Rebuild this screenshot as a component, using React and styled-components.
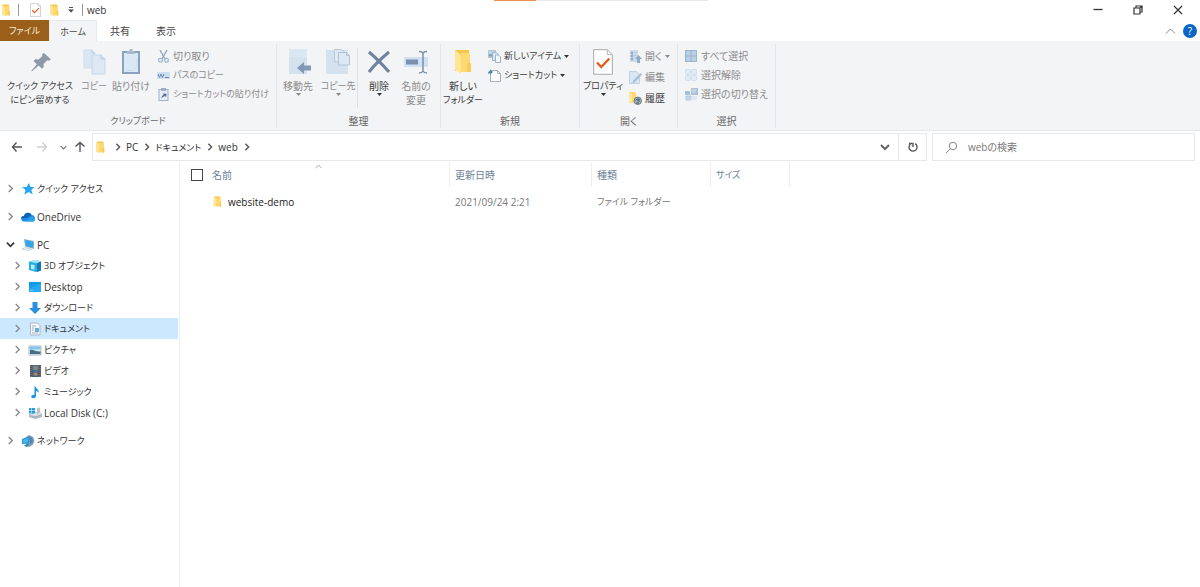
import React from 'react';
import styled, { createGlobalStyle } from 'styled-components';

const GlobalStyle = createGlobalStyle`
  * { box-sizing: border-box; }
  html { height: 100%; }
  body {
    margin: 0;
    height: 100%;
    background: #fff;
    color: #333;
    font-family: "Open Sans", "Noto Sans CJK JP", sans-serif;
    font-size: 10px;
    line-height: 14px;
    font-feature-settings: "palt";
  }
  #root { height: 100%; }
  button, input { font: inherit; font-feature-settings: inherit; color: inherit; }
  button { padding: 0; border: 0; background: none; }
  svg { display: block; flex: none; }
`;

// Katakana labels are set one step smaller than kanji and Latin ones.
const sizeFor = (text) => (/[ァ-ヶ]/.test(text) ? 9 : 10);

const Label = styled.span`
  font-size: ${(p) => sizeFor(p.children)}px;
`;

const Window = styled.div`
  min-height: 100%;
  display: flex;
  flex-direction: column;
`;

const LoadStrip = styled.div`
  position: absolute;
  top: 0;
  left: 41%;
  width: 214px;
  height: 1px;
  margin-left: 2px;
  background: linear-gradient(90deg, #ee9052 0 42px, #e8e8e8 42px);
`;

const TitleBar = styled.header`
  display: flex;
  align-items: center;
  height: 20px;
  padding: 0 16px 0 1px;
`;

const QuickTools = styled.div`
  display: flex;
  align-items: center;
  flex: 1;
`;

const QuickButton = styled.button`
  display: grid;
  place-items: center;
  width: ${(p) => p.$w || 18}px;
  height: 20px;
`;

const Rule = styled.span`
  width: 1px;
  height: 12px;
  margin: 0 ${(p) => p.$right || 0}px 0 ${(p) => p.$left || 0}px;
  background: #999;
`;

const Title = styled.h1`
  margin: 0;
  font-size: 10px;
  font-weight: 400;
  line-height: 20px;
`;

const WindowControls = styled.div`
  display: flex;
  gap: 28px;
`;

const ControlButton = styled.button`
  display: grid;
  place-items: center;
  width: 12px;
  height: 18px;
`;

const TabBar = styled.nav`
  display: flex;
  align-items: center;
  height: 21px;
  padding-right: 3px;
`;

const Tab = styled.button`
  width: ${(p) => p.$w || 46}px;
  height: 21px;
  color: ${(p) => (p.$file ? '#fff3df' : '#444')};
  background: ${(p) => (p.$file ? '#995f1b' : p.$active ? '#f3f4f6' : 'transparent')};
  ${(p) => p.$active && 'border: solid #e8e9eb; border-width: 1px 1px 0;'}
`;

const TabEnd = styled.div`
  display: flex;
  align-items: center;
  gap: 7px;
  margin-left: auto;
`;

const HelpButton = styled.button`
  width: 14px;
  height: 14px;
  border-radius: 50%;
  background: #0b66c3;
  color: #fff;
  line-height: 14px;
`;

const Ribbon = styled.section`
  display: flex;
  height: 90px;
  padding-top: 3px;
  background: #f3f4f6;
  border-bottom: 1px solid #e6e7e9;
`;

const Group = styled.div`
  display: flex;
  flex-direction: column;
  justify-content: space-between;
  flex: none;
  width: ${(p) => p.$w}px;
  height: 84px;
  border-right: 1px solid #e4e5e8;
`;

const GroupBody = styled.div`
  display: flex;
  align-items: flex-start;
`;

const GroupName = styled.div`
  text-align: center;
  color: #666;
`;

const BigButton = styled.button`
  display: flex;
  flex: none;
  flex-direction: column;
  align-items: center;
  width: ${(p) => p.$w}px;
  padding-top: 5px;
  color: ${(p) => (p.$off ? '#8b8b8b' : '#3c3c3c')};
  white-space: nowrap;

  > svg:first-child { margin-bottom: 4px; }
`;

const SmallList = styled.div`
  display: flex;
  flex-direction: column;
  gap: ${(p) => p.$gap || 5}px;
  padding: 5px 0 0 ${(p) => p.$left || 3}px;
`;

const SmallButton = styled.button`
  display: flex;
  align-items: center;
  gap: 3px;
  height: 14px;
  color: ${(p) => (p.$off ? '#8b8b8b' : '#3c3c3c')};
  white-space: nowrap;
`;

const Divider = styled.span`
  width: 1px;
  height: 60px;
  margin-top: 4px;
  background: #dfe0e3;
`;

const AddressRow = styled.div`
  display: flex;
  align-items: center;
  padding: 2px 5px 0 8px;
`;

const NavButton = styled.button`
  display: grid;
  place-items: center;
  width: ${(p) => p.$w || 18}px;
  height: 28px;
`;

const AddressBar = styled.div`
  display: flex;
  align-items: center;
  flex: 1;
  height: 28px;
  padding-left: 3px;
  border: 1px solid #e8e8e8;
`;

const Crumbs = styled.ol`
  display: flex;
  align-items: center;
  flex: 1;
  gap: 5px;
  margin: 0;
  padding: 0 0 0 9px;
  list-style: none;

  li { display: flex; align-items: center; gap: 4px; }
`;

const CrumbLink = styled.a`
  color: #333;
  text-decoration: none;
`;

const RefreshButton = styled.button`
  display: grid;
  place-items: center;
  width: 28px;
  height: 26px;
  border-left: 1px solid #e8e8e8;
`;

const SearchBox = styled.label`
  display: flex;
  align-items: center;
  gap: 10px;
  flex: 0 1 263px;
  height: 28px;
  margin-left: 5px;
  padding-left: 12px;
  border: 1px solid #e8e8e8;
`;

const SearchInput = styled.input`
  flex: 1;
  min-width: 0;
  padding: 0;
  border: 0;
  outline: 0;
  background: transparent;
  &::placeholder { color: #777; opacity: 1; }
`;

const Main = styled.div`
  display: flex;
  flex: 1;
  padding-top: 2px;
`;

const Sidebar = styled.nav`
  flex: none;
  width: 180px;
  padding: 15px 1px 0 0;
  border-right: 1px solid #f0f0f0;
`;

const Tree = styled.ul`
  margin: 0;
  padding: 0;
  list-style: none;
  > li + li { margin-top: ${(p) => (p.$nested ? 0 : 7)}px; }
`;

const TreeLink = styled.a`
  display: flex;
  align-items: center;
  height: 21px;
  padding-left: ${(p) => (p.$nested ? 13 : 6)}px;
  color: #333;
  text-decoration: none;
  white-space: nowrap;
  background: ${(p) => (p.$selected ? '#cce8ff' : 'transparent')};

  > svg:first-child { margin-right: 6px; }
  > svg + svg { margin-right: 2px; }
`;

const Files = styled.main`
  flex: 1;
  min-width: 0;
`;

const FileTable = styled.table`
  width: 100%;
  table-layout: fixed;
  border-collapse: separate;
  border-spacing: 0;
  text-align: left;
`;

const HeadCell = styled.th`
  position: relative;
  width: ${(p) => (p.$w ? `${p.$w}px` : 'auto')};
  height: 24px;
  padding: 0 0 0 ${(p) => p.$left || 5}px;
  border-right: ${(p) => (p.$w ? '1px solid #ededed' : '0')};
  color: #6c7f98;
  font-size: ${(p) => (p.$kana ? 9 : 10)}px;
  font-weight: 400;
`;

const CheckLabel = styled.span`
  display: flex;
  align-items: center;
  gap: 9px;
`;

const Check = styled.input`
  appearance: none;
  width: 12px;
  height: 12px;
  margin: 0;
  border: 1px solid #444;
  background: #fff;
`;

const SortMark = styled.span`
  position: absolute;
  top: 0;
  left: 50%;
`;

const Cell = styled.td`
  height: 29px;
  padding: 0 0 0 ${(p) => p.$left || 5}px;
  color: ${(p) => (p.$name ? '#222' : '#777')};
`;

const FileLink = styled.a`
  display: flex;
  align-items: center;
  gap: 5px;
  color: inherit;
  text-decoration: none;
`;

const Chevron = ({ dir = 'right', size = 8, color = '#777', weight = 1.2 }) => {
  const turn = { right: 0, down: 90, left: 180, up: 270 }[dir];
  return (
    <svg width={size} height={size} viewBox="0 0 8 8" aria-hidden="true">
      <path d="M2.4 .8 5.6 4 2.4 7.2" transform={`rotate(${turn} 4 4)`} fill="none" stroke={color} strokeWidth={weight} />
    </svg>
  );
};

const Caret = ({ color = '#333' }) => (
  <svg width="5" height="3" viewBox="0 0 5 3" aria-hidden="true"><path d="M0 0h5L2.500 3z" fill={color} /></svg>
);

const Icon = ({ w = 14, h = w, box = `0 0 ${w} ${h}`, children }) => (
  <svg width={w} height={h} viewBox={box} fill="none" aria-hidden="true">{children}</svg>
);

const FolderIcon = ({ w = 9, h = 12 }) => (
  <Icon w={w} h={h} box="0 0 18 26">
    <path d="M1 1h14v21H1z" fill="#f5c64f" />
    <path d="M1 1l6 5v19l-6-4z" fill="#ffe596" />
    <path d="M7 4h9v19H7z" fill="#ffd96f" />
    <path d="M13 14h4v9h-4z" fill="#f8cc5c" />
  </Icon>
);

const CheckedPage = ({ w = 11, h = 14 }) => (
  <Icon w={w} h={h} box="0 0 20 26">
    <path d="M.7.7h13.600l5 5v19.600H.7z" fill="#fff" stroke="#a8a8a8" />
    <path d="M14.300.7v5h5" stroke="#b4b4b4" />
    <path d="m4 13.500 4.300 4.500 8-8.500" stroke="#e85d19" strokeWidth="2.300" />
  </Icon>
);

const PinIcon = () => (
  <Icon w={26} h={26}>
    <path d="m17 4 7 6.500-2.200 1.200-1.600-.4-3.700 3.700.2 3.200-1.700 1.600-3.300-3.200L5 22.300 4.200 22l5.600-6.800-3.300-3.300 1.700-1.600 3.300.2 3.900-3.600-.4-1.700z" fill="#8d99a6" />
  </Icon>
);

const CopyIcon = () => (
  <Icon w={26} h={26}>
    <path d="M3 1h8l3 3v15H3z" fill="#d9e6f3" stroke="#cddbea" />
    <path d="M11 1v3h3" stroke="#bccfe1" />
    <path d="M11 6h9l4 4v15H11z" fill="#dce8f4" stroke="#c6d7e8" />
    <path d="M20 6v4h4" stroke="#b5cade" />
  </Icon>
);

const PasteIcon = () => (
  <Icon w={26} h={26}>
    <rect x="5" y="3" width="16" height="21" fill="#d9e8f7" stroke="#8ba1bd" strokeWidth="2" />
    <path d="M9 2h2.500V0h3v2H17v3H9z" fill="#a9b9cc" />
    <path d="M8 21.500h7l4-4V9" stroke="#cbddec" />
  </Icon>
);

const MoveIcon = () => (
  <Icon w={26} h={26}>
    <path d="M4 0h18v25H4z" fill="#d4e2ef" />
    <path d="M4 0h18v8H4z" fill="#dbe7f3" />
    <path d="m12 19 7-6v3.500h7v5h-7V25z" fill="#8298b4" />
  </Icon>
);

const CopyToIcon = () => (
  <Icon w={26} h={26}>
    <path d="M1 1h22v24H1z" fill="#d4e2ef" />
    <path d="M9.500.5h7l3 3V13h-10z" fill="#dce9f5" stroke="#b9c9da" />
    <path d="M13.500 3.500h8l3 3V16h-11z" fill="#dce9f5" stroke="#b3c4d6" />
    <path d="M21.500 3.500v3h3" stroke="#b3c4d6" />
  </Icon>
);

const DeleteIcon = () => (
  <Icon w={26} h={26}>
    <path d="M3 3c6 5 13 12 20 20M23 3C17 8 9 15 3 23" stroke="#6f83a0" strokeWidth="3" />
  </Icon>
);

const RenameIcon = () => (
  <Icon w={26} h={26}>
    <path d="M1 8h24v10H1z" fill="#cfe1f2" />
    <path d="M3 10.500h12v5H3z" fill="#7890ad" />
    <path d="M16 2.500c2 0 3.500.5 4 1.500.5-1 2-1.500 4-1.500M20 4v18M16 24c2 0 3.500-1 4-2 .5 1 2 2 4 2" stroke="#7890ad" strokeWidth="1.500" />
  </Icon>
);

const CutIcon = () => (
  <Icon w={13}>
    <path d="M3 0 8 9M10 0 5 9" stroke="#8fa2b9" strokeWidth="1.300" />
    <circle cx="3.500" cy="10.300" r="1.900" stroke="#9eb4cd" strokeWidth="1.200" />
    <circle cx="9.500" cy="10.300" r="1.900" stroke="#9eb4cd" strokeWidth="1.200" />
  </Icon>
);

const PathIcon = () => (
  <Icon w={13}>
    <path d="M0 3h13v7H0z" fill="#cbdff2" />
    <path d="m1 5 1.500 3.500L4 5l1.500 3.500L7 5M8 8.500h4" stroke="#7088a8" />
  </Icon>
);

const PasteLinkIcon = () => (
  <Icon w={13}>
    <rect x="2" y="1.500" width="9" height="11" fill="#e4eef8" stroke="#9db0c6" />
    <path d="M4 0h5v3H4z" fill="#9dafc4" />
    <path d="M4.500 10.500c0-2 .5-3 2-3.500L6 5.500l3.500.2-.4 3.500-1-1.200c-1.600.5-2.600 1-3.600 2.500z" fill="#58718f" />
  </Icon>
);

const NewItemIcon = () => (
  <Icon w={13}>
    <path d="M.5.5h7v7h-7z" fill="#b9d8f0" stroke="#b3c2cf" />
    <path d="M1 4h6v2.500H1z" fill="#7fa3c0" />
    <path d="M4.500 2.500h4l2 2v6h-6z" fill="#d5e9f8" stroke="#a3b2c0" />
    <path d="M7.500 5h3l2 2v5.500h-5z" fill="#f2f8fc" stroke="#a3b2c0" />
  </Icon>
);

const ShortcutIcon = () => (
  <Icon w={13}>
    <path d="M2.500 1.500h7l3 3v8h-10z" fill="#fff" stroke="#a8b1bb" />
    <path d="M9.500 1.500v3h3" stroke="#a8b1bb" />
    <path d="M0 5c0-2 .8-3 2-3V.5L5 3 2 5.500V4C1.200 4 .6 4.300 0 5z" fill="#4a7fb5" />
  </Icon>
);

const OpenIcon = () => (
  <Icon w={13}>
    <path d="M1 0h8v12H1z" fill="#ccdcec" />
    <path d="M2 2h2v2H2zM2 5h2v2H2zM2 8h2v2H2zM5.500 2.500H8M5.500 5.500H8" fill="#8fa8c3" stroke="#9bb2ca" strokeWidth=".5" />
    <path d="m9.500 5 3.500 4h-2v4H8V9H6z" fill="#92a9c5" />
  </Icon>
);

const EditIcon = () => (
  <Icon w={13}>
    <path d="M.5.5h7l3 3v9H.5z" fill="#d9e6f3" stroke="#bfd0e1" />
    <path d="m4 10 7.500-8 1.500 1.500-7.500 8L3.500 12z" fill="#a7bdd6" />
  </Icon>
);

const HistoryIcon = () => (
  <Icon w={13}>
    <path d="M0 0h6l1 2v9H0z" fill="#ffd86a" />
    <path d="M0 0 3 2v10l-3-2z" fill="#ffe79d" />
    <circle cx="8.800" cy="8.800" r="3.700" fill="#a9b8bd" stroke="#6e7c83" />
    <path d="M6.500 8.500 8 7h2.500L8.500 9H11M7 11h3" stroke="#375f78" />
  </Icon>
);

const TilesIcon = ({ kind }) => (
  <Icon w={13}>
    {kind === 'all' && <>
      <path d="M0 0h12v12H0z" fill="#b9cfe5" />
      <path d="M.5.5h11v11H.5zM6 0v12M0 6h12" stroke="#9db4cc" />
    </>}
    {kind === 'none' && [0, 6].map((x) => [0, 6].map((y) => (
      <rect key={`${x}-${y}`} x={x + .5} y={y + .5} width="5" height="5" rx="1" fill="#e0ebf6" stroke="#d0dfed" />
    )))}
    {kind === 'invert' && <>
      <path d="M0 3h5v4H0zM6 0h7v7H6z" fill="#a9bfd6" />
      <path d="M7 1h4v4H7zM1 8h5v4H1z" fill="#c3d6e9" stroke="#b6cadf" />
      <path d="M7 8h5v4H7z" fill="#dbe7f3" />
    </>}
  </Icon>
);

const ArrowIcon = ({ dir, color = '#555' }) => (
  <Icon w={12}>
    <path d="M5.500 1.500 1.500 6l4 4.500M1.500 6H11" transform={`rotate(${{ left: 0, up: 90, right: 180 }[dir]} 6 6)`} stroke={color} strokeWidth="1.400" />
  </Icon>
);

const StarIcon = () => (
  <Icon><path d="m8 1 1.500 4 4 .1-3.200 3 1.500 4.400L7.800 10l-4.500 2.500L4.500 8 1 5.300l4.700-.4z" fill="#28a4f2" /></Icon>
);
const CloudIcon = () => (
  <Icon>
    <path d="M3 11.500C-1 11-.5 6 3 6c.8-4 6-4.500 7.500-1 4-.2 5 6 1 6.500z" fill="#1b8ae0" />
    <path d="M3 6c.8-4 6-4.500 7.500-1L6 8 0 8.200C.2 7 1 6 3 6z" fill="#0e63b7" />
    <path d="m4 11.500 6-4.500c1.500-.8 4 .4 4 2.200 0 1.500-1 2.300-2.500 2.300z" fill="#29a4ed" />
  </Icon>
);
const PcIcon = () => (
  <Icon>
    <path d="m3 1 10 2v8L4 8.500z" fill="#8fb3cb" /><path d="m4 2 8 1.700v6L5 8z" fill="#35a5ea" />
    <path d="m1 10 5-1 6 2-5 2-6-1.500z" fill="#cfd6db" /><path d="m3 10.500 5 1.300" stroke="#eff3f5" />
  </Icon>
);
const CubeIcon = () => (
  <Icon>
    <path d="m1 2.500 7-1.500 5 1.500v9L8 13l-7-2z" fill="#2aaee0" />
    <path d="m1 2.500 7-1.500 5 1.500-4 1.800z" fill="#a8e9f8" /><path d="m9 4.300 4-1.800v9L9 13z" fill="#1477b8" />
    <path d="M3 5.500 6.500 6v4.500L3 10z" fill="#b7f0f7" />
  </Icon>
);
const DesktopIcon = () => (
  <Icon><path d="M1 2h12v10H1z" fill="#139bea" /><path d="M1 8.500 13 3v9H1z" fill="#27a9f3" /><path d="M2 10.500h3" stroke="#7ccbfb" /></Icon>
);
const DownIcon = () => (
  <Icon><path d="M4.500 1h5v6H13l-6 6-6-6h3.500z" fill="#2c91dc" /></Icon>
);
const DocIcon = () => (
  <Icon>
    <path d="M2.500 1h7L12 3.500V13H2.500z" fill="#f5f8fa" stroke="#aab6c0" />
    <path d="M4 4h4M4 6h2M4 8h2M4 11h6" stroke="#9db3c4" /><path d="M7 6h4v4H7z" fill="#6fabd0" />
  </Icon>
);
const PictureIcon = () => (
  <Icon>
    <path d="M1 3h12v9H1z" fill="#d8eaf5" stroke="#b1bac1" /><path d="M1.500 3.500h11v3h-11z" fill="#83c6ed" />
    <path d="M2 7c3-1 6 2 10.500 1.500V11H2z" fill="#456f83" />
  </Icon>
);
const VideoIcon = () => (
  <Icon>
    <path d="M2 1h11v12H2z" fill="#4e5358" /><path d="M4.500 1.500h6v5h-6z" fill="#5686aa" /><path d="M4.500 7h6v5.500h-6z" fill="#406d9d" />
    <path d="m6 2 3 1v3L7 5zM5 10l3-2 2 3-3 1z" fill="#b5824c" /><path d="M3 2v11M12 2v11" stroke="#8f9499" strokeDasharray="1 1" />
  </Icon>
);
const MusicIcon = () => (
  <Icon><path d="M7 1c.5 2.500 4.500 3 3.500 7-.5-1.500-1.500-2-2.500-2.300V11c0 2.500-4.800 3-4.800.8 0-1.700 2-2.500 3.300-2V1z" fill="#1498e5" /></Icon>
);
const DiskIcon = () => (
  <Icon>
    <path d="m5 7 6-2 3 3v3l-7 2-6-2V8z" fill="#aeb6bc" /><path d="m1 9 7 1 6-2-3-2-5 1z" fill="#e0e4e7" />
    <path d="M9 2c2-1.500 4 0 3 4l-3 3z" fill="#bcc3c9" /><path d="M1 2h2.500v2.500H1zM4 2h3v2.500H4zM1 5h2.500v2.500H1zM4 5h3v2.500H4z" fill="#249ddf" />
  </Icon>
);
const NetworkIcon = () => (
  <Icon>
    <path d="m8 1 4 2 1.500 4-2 4-3.500 2-3-3-1-6z" fill="#7f9db2" /><path d="m8 2 3 2 1 4-3 2z" fill="#4f86aa" />
    <path d="m1 5 7-2.500v7L1 10z" fill="#2596d6" /><path d="m2 6 5-2V8L2 9.200z" fill="#43b5f0" /><path d="m3 11 4-1 1 2-3 1z" fill="#2e84bd" />
  </Icon>
);

const pcFolders = [
  ['3D オブジェクト', CubeIcon],
  ['Desktop', DesktopIcon],
  ['ダウンロード', DownIcon],
  ['ドキュメント', DocIcon],
  ['ピクチャ', PictureIcon],
  ['ビデオ', VideoIcon],
  ['ミュージック', MusicIcon],
  ['Local Disk (C:)', DiskIcon],
];

const TreeItem = ({ label, icon: Glyph, open, nested, selected, children }) => (
  <li>
    <TreeLink href="#" $nested={nested} $selected={selected} aria-current={selected ? 'page' : undefined}>
      <Chevron dir={open ? 'down' : 'right'} size={9} color={open ? '#333' : '#888'} weight={open ? 1.5 : 1.2} />
      <Glyph />
      <Label>{label}</Label>
    </TreeLink>
    {children}
  </li>
);

const Large = ({ icon, lines, w, off, menu }) => (
  <BigButton type="button" $w={w} $off={off}>
    {icon}
    {lines.map((line) => <Label key={line}>{line}</Label>)}
    {menu && <Caret color={off ? '#888' : '#333'} />}
  </BigButton>
);

const Small = ({ icon, label, off, menu }) => (
  <SmallButton type="button" $off={off}>
    {icon}
    <Label>{label}</Label>
    {menu && <Caret color={off ? '#888' : '#333'} />}
  </SmallButton>
);

const Crumb = ({ label }) => (
  <li>
    <Chevron color="#555" weight={1.4} />
    {label && <CrumbLink href="#"><Label>{label}</Label></CrumbLink>}
  </li>
);

export default function App() {
  return (
    <>
      <GlobalStyle />
      <Window>
        <LoadStrip />
        <TitleBar>
          <QuickTools>
            <FolderIcon w={10} h={13} />
            <Rule $left={7} $right={6} />
            <QuickButton type="button" aria-label="プロパティ" $w={20}><CheckedPage /></QuickButton>
            <QuickButton type="button" aria-label="新しいフォルダー"><FolderIcon w={9} h={13} /></QuickButton>
            <QuickButton type="button" aria-label="カスタマイズ" $w={16}>
              <Icon w={6}><path d="M1 .5h4" stroke="#555" /><path d="M0 2.500h6L3 5.500z" fill="#444" /></Icon>
            </QuickButton>
            <Rule $left={3} $right={4} />
            <Title>web</Title>
          </QuickTools>
          <WindowControls>
            <ControlButton type="button" aria-label="最小化"><Icon w={10}><path d="M.5 4.500h9" stroke="#333" strokeWidth="1.300" /></Icon></ControlButton>
            <ControlButton type="button" aria-label="元に戻す"><Icon w={10}><path d="M1 3h6v6H1zM3 3V1h6v6H7M7 3l2-2" stroke="#333" strokeWidth="1.200" /></Icon></ControlButton>
            <ControlButton type="button" aria-label="閉じる"><Icon w={10}><path d="m1 1 8 8M9 1 1 9" stroke="#333" strokeWidth="1.200" /></Icon></ControlButton>
          </WindowControls>
        </TitleBar>

        <TabBar>
          <Tab type="button" $file $w={49}><Label>ファイル</Label></Tab>
          <Tab type="button" $active $w={48}><Label>ホーム</Label></Tab>
          <Tab type="button"><Label>共有</Label></Tab>
          <Tab type="button"><Label>表示</Label></Tab>
          <TabEnd>
            <Icon w={11} h={8}><path d="m1 6.500 4.500-4.500L10 6.500" stroke="#888" /></Icon>
            <HelpButton type="button" aria-label="ヘルプ">?</HelpButton>
          </TabEnd>
        </TabBar>

        <Ribbon>
          <Group $w={277}>
            <GroupBody>
              <Large w={80} icon={<PinIcon />} lines={['クイック アクセス', 'にピン留めする']} />
              <Large w={28} off icon={<CopyIcon />} lines={['コピー']} />
              <Large w={46} off icon={<PasteIcon />} lines={['貼り付け']} />
              <SmallList>
                <Small off icon={<CutIcon />} label="切り取り" />
                <Small off icon={<PathIcon />} label="パスのコピー" />
                <Small off icon={<PasteLinkIcon />} label="ショートカットの貼り付け" />
              </SmallList>
            </GroupBody>
            <GroupName><Label>クリップボード</Label></GroupName>
          </Group>
          <Group $w={164}>
            <GroupBody>
              <Large w={42} off menu icon={<MoveIcon />} lines={['移動先']} />
              <Large w={38} off menu icon={<CopyToIcon />} lines={['コピー先']} />
              <Divider />
              <Large w={42} menu icon={<DeleteIcon />} lines={['削除']} />
              <Large w={32} off icon={<RenameIcon />} lines={['名前の', '変更']} />
            </GroupBody>
            <GroupName><Label>整理</Label></GroupName>
          </Group>
          <Group $w={139}>
            <GroupBody>
              <Large w={44} icon={<FolderIcon w={18} h={26} />} lines={['新しい', 'フォルダー']} />
              <SmallList>
                <Small menu icon={<NewItemIcon />} label="新しいアイテム" />
                <Small menu icon={<ShortcutIcon />} label="ショートカット" />
              </SmallList>
            </GroupBody>
            <GroupName><Label>新規</Label></GroupName>
          </Group>
          <Group $w={98}>
            <GroupBody>
              <Large w={46} menu icon={<CheckedPage w={20} h={26} />} lines={['プロパティ']} />
              <SmallList $gap={7}>
                <Small off menu icon={<OpenIcon />} label="開く" />
                <Small off icon={<EditIcon />} label="編集" />
                <Small icon={<HistoryIcon />} label="履歴" />
              </SmallList>
            </GroupBody>
            <GroupName><Label>開く</Label></GroupName>
          </Group>
          <Group $w={98}>
            <GroupBody>
              <SmallList $left={7}>
                <Small off icon={<TilesIcon kind="all" />} label="すべて選択" />
                <Small off icon={<TilesIcon kind="none" />} label="選択解除" />
                <Small off icon={<TilesIcon kind="invert" />} label="選択の切り替え" />
              </SmallList>
            </GroupBody>
            <GroupName><Label>選択</Label></GroupName>
          </Group>
        </Ribbon>

        <AddressRow>
          <NavButton type="button" aria-label="戻る"><ArrowIcon dir="left" /></NavButton>
          <NavButton type="button" aria-label="進む" $w={32}><ArrowIcon dir="right" color="#cfcfcf" /></NavButton>
          <NavButton type="button" aria-label="最近表示した場所" $w={10}><Chevron dir="down" size={7} weight={1.5} /></NavButton>
          <NavButton type="button" aria-label="上へ" $w={24}><ArrowIcon dir="up" /></NavButton>
          <AddressBar>
            <FolderIcon w={9} h={13} />
            <Crumbs>
              <Crumb label="PC" />
              <Crumb label="ドキュメント" />
              <Crumb label="web" />
              <Crumb />
            </Crumbs>
            <NavButton type="button" aria-label="以前の場所" $w={26}><Chevron dir="down" size={10} color="#666" weight={1.6} /></NavButton>
            <RefreshButton type="button" aria-label="更新">
              <Icon w={12}><path d="M8.200 2.700A4 4 0 1 1 3.500 3M2 2.500h4v3.500" stroke="#555" strokeWidth="1.400" /></Icon>
            </RefreshButton>
          </AddressBar>
          <SearchBox>
            <Icon w={13}><circle cx="8" cy="5" r="3.700" stroke="#888" /><path d="M5.500 7.500 1 12" stroke="#888" /></Icon>
            <SearchInput type="search" aria-label="webの検索" placeholder="webの検索" />
          </SearchBox>
        </AddressRow>

        <Main>
          <Sidebar>
            <Tree>
              <TreeItem label="クイック アクセス" icon={StarIcon} />
              <TreeItem label="OneDrive" icon={CloudIcon} />
              <TreeItem label="PC" icon={PcIcon} open>
                <Tree $nested>
                  {pcFolders.map(([label, icon]) => (
                    <TreeItem key={label} label={label} icon={icon} nested selected={label === 'ドキュメント'} />
                  ))}
                </Tree>
              </TreeItem>
              <TreeItem label="ネットワーク" icon={NetworkIcon} />
            </Tree>
          </Sidebar>
          <Files>
            <FileTable>
              <thead>
                <tr>
                  <HeadCell $w={270} $left={11}>
                    <CheckLabel>
                      <Check type="checkbox" aria-label="すべて選択" />
                      名前
                    </CheckLabel>
                    <SortMark><Chevron dir="up" size={7} color="#999" weight={1} /></SortMark>
                  </HeadCell>
                  <HeadCell $w={142}>更新日時</HeadCell>
                  <HeadCell $w={119}>種類</HeadCell>
                  <HeadCell $w={79} $kana>サイズ</HeadCell>
                  <HeadCell aria-hidden="true" />
                </tr>
              </thead>
              <tbody>
                <tr>
                  <Cell $name $left={32}>
                    <FileLink href="#"><FolderIcon w={11} h={12} /><Label>website-demo</Label></FileLink>
                  </Cell>
                  <Cell><Label>2021/09/24 2:21</Label></Cell>
                  <Cell><Label>ファイル フォルダー</Label></Cell>
                  <Cell />
                  <Cell />
                </tr>
              </tbody>
            </FileTable>
          </Files>
        </Main>
      </Window>
    </>
  );
}
